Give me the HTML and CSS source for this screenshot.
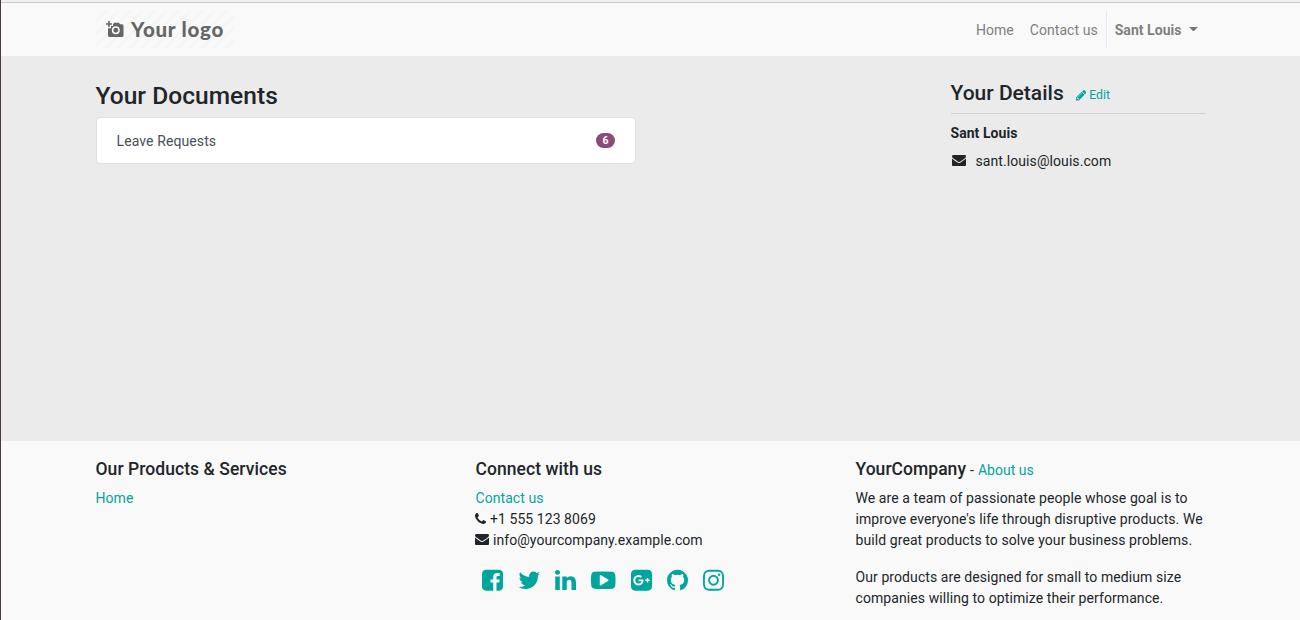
FILE: index.html
```
<!DOCTYPE html>
<html lang="en">
<head>
<meta charset="utf-8">
<title>Your Documents</title>
<link rel="stylesheet" href="styles.css">
</head>
<body>
<header class="header">
  <div class="container nav">
    <a class="logo">
      <svg class="logo-icon" viewBox="0 0 18 17"><path d="M2.200 0h1.600v2.200H6v1.600H3.800v2.200H2.200V3.800H0V2.200h2.200zM7 3.200l1.200-1.400h4.600L14.200 3.200H16q1.500 0 1.500 1.500V14.500q0 1.500-1.500 1.500H3.500Q2 16 2 14.500V7.200h3V5h2z" fill="#666"/><circle cx="9.800" cy="9.300" r="3.200" fill="none" stroke="#f9f9f9" stroke-width="1.500"/></svg>
      <span class="logo-text">Your logo</span>
    </a>
    <nav class="links">
      <a class="link home">Home</a>
      <a class="link contact">Contact us</a>
      <a class="link user"><b>Sant Louis</b><span class="caret"></span></a>
    </nav>
  </div>
</header>
<main class="main">
  <div class="container page">
    <section class="documents">
      <h3 class="title">Your Documents</h3>
      <div class="card"><span class="card-name">Leave Requests</span><span class="badge">6</span></div>
    </section>
    <aside class="details">
      <div class="details-head">
        <h4 class="details-title">Your Details</h4>
        <a class="edit"><svg class="pencil" viewBox="128 0 1536 1792"><path d="M491 1536l91-91-235-235-91 91v107h128v128h107zm523-928q0-22-22-22-10 0-17 7l-542 542q-7 7-7 17 0 22 22 22 10 0 17-7l542-542q7-7 7-17zm-54-192l416 416-832 832h-416v-416zm683 96q0 53-37 90l-166 166-416-416 166-165q36-38 90-38 53 0 91 38l235 234q37 39 37 91z"/></svg><span>Edit</span></a>
      </div>
      <div class="person">Sant Louis</div>
      <div class="mail"><svg class="icon" viewBox="0 0 1792 1792"><path d="M1792 710v794q0 66-47 113t-113 47h-1472q-66 0-113-47t-47-113v-794q44 49 101 87 362 246 497 345 57 42 92.500 65.500t94.500 48 110 24.500h2q51 0 110-24.500t94.500-48 92.500-65.500q170-123 498-345 57-39 100-87zm0-294q0 79-49 151t-122 123q-376 261-468 325-10 7-42.500 31t-54 38.500-52 32.500-57.500 27-50 9h-2q-23 0-50-9t-57.500-27-52-32.500-54-38.500-42.500-31q-91-64-262-182.500t-205-142.500q-62-42-117-115.500t-55-136.500q0-78 41.500-130t118.500-52h1472q65 0 112.500 47t47.500 113z"/></svg><span class="mail-text">sant.louis@louis.com</span></div>
    </aside>
  </div>
</main>
<footer class="footer">
  <div class="container columns">
    <section class="col">
      <h5 class="heading products">Our Products &amp; Services</h5>
      <a class="teal">Home</a>
    </section>
    <section class="col">
      <h5 class="heading">Connect with us</h5>
      <a class="teal">Contact us</a>
      <div class="row phone"><svg class="phone-icon" viewBox="192 0 1408 1792"><path d="M1600 1240q0 27-10 70.500t-21 68.500q-21 50-122 106-94 51-186 51-27 0-52.500-3.500t-57.500-12.500-47.500-14.500-55.500-20.500-49-18q-98-35-175-83-128-79-264.500-215.500t-215.500-264.500q-48-77-83-175-3-9-18-49t-20.500-55.500-14.500-47.500-12.500-57.500-3.500-52.500q0-92 51-186 56-101 106-122 25-11 68.500-21t70.500-10q14 0 21 3 18 6 53 76 11 19 30 54t35 63.500 31 53.500q3 4 17.500 25t21.500 35.500 7 28.500q0 20-28.500 50t-62 55-62 53-28.500 46q0 9 5 22.500t8.500 20.500 14 24 11.500 19q76 137 174 235t235 174q2 1 19 11.500t24 14 20.500 8.500 22.500 5q18 0 46-28.500t53-62 55-62 50-28.500q14 0 28.500 7t35.500 21.500 25 17.500q25 15 53.500 31t63.500 35 54 30q70 35 76 53 3 7 3 21z"/></svg><span>+1 555 123 8069</span></div>
      <div class="row"><svg class="icon" viewBox="0 0 1792 1792"><path d="M1792 710v794q0 66-47 113t-113 47h-1472q-66 0-113-47t-47-113v-794q44 49 101 87 362 246 497 345 57 42 92.500 65.500t94.500 48 110 24.500h2q51 0 110-24.500t94.500-48 92.500-65.500q170-123 498-345 57-39 100-87zm0-294q0 79-49 151t-122 123q-376 261-468 325-10 7-42.500 31t-54 38.500-52 32.500-57.500 27-50 9h-2q-23 0-50-9t-57.500-27-52-32.500-54-38.500-42.500-31q-91-64-262-182.500t-205-142.500q-62-42-117-115.500t-55-136.500q0-78 41.500-130t118.500-52h1472q65 0 112.500 47t47.500 113z"/></svg><span class="company-mail">info@yourcompany.example.com</span></div>
      <div class="social">
        <svg class="s" viewBox="128 0 1536 1792"><path d="M1376 128q119 0 203.500 84.500t84.500 203.500v960q0 119-84.500 203.500t-203.500 84.500h-188v-595h199l30-232h-229v-148q0-56 23.500-84t91.500-28l122-1v-207q-63-9-178-9-136 0-217.500 80t-81.500 226v171h-200v232h200v595h-532q-119 0-203.500-84.500t-84.500-203.500v-960q0-119 84.500-203.500t203.500-84.500h960z"/></svg>
        <svg class="s twitter" viewBox="64 0 1664 1792"><path d="M1684 408q-67 98-162 167 1 14 1 42 0 130-38 259.500t-115.500 248.500-184.500 210.500-258 146-323 54.500q-271 0-496-145 35 4 78 4 225 0 401-138-105-2-188-64.500t-114-159.500q33 5 61 5 43 0 85-11-112-23-185.500-111.500t-73.500-205.500v-4q68 38 146 41-66-44-105-115t-39-154q0-88 44-163 121 149 294.500 238.500t371.500 99.500q-8-38-8-74 0-134 94.500-228.500t228.500-94.500q140 0 236 102 109-21 205-78-37 115-142 178 93-10 186-50z"/></svg>
        <svg class="s" viewBox="128 0 1536 1792"><path d="M477 625v991h-330v-991h330zm21-306q1 73-50.500 122t-135.500 49h-2q-82 0-132-49t-50-122q0-74 51.500-122.500t134.500-48.500 133 48.500 51 122.500zm1166 729v568h-329v-530q0-105-40.500-164.500t-126.500-59.500q-63 0-105.500 34.500t-63.500 85.500q-11 30-11 81v553h-329q2-399 2-647t-1-296l-1-48h329v144h-2q20-32 41-56t56.500-52 87-43.500 114.500-15.500q171 0 275 113.500t104 332.500z"/></svg>
        <svg class="s youtube" viewBox="0 0 1792 1792"><path d="M1280 896q0-37-30-54l-512-320q-31-20-65-2-33 18-33 56v640q0 38 33 56 16 8 31 8 20 0 34-10l512-320q30-17 30-54zm512 0q0 96-1 150t-8.500 136.500-22.500 147.500q-16 73-69 123t-124 58q-222 25-671 25t-671-25q-71-8-124.500-58t-69.500-123q-14-65-21.500-147.500t-8.500-136.500-1-150 1-150 8.500-136.500 22.500-147.500q16-73 69-123t124-58q222-25 671-25t671 25q71 8 124.500 58t69.500 123q14 65 21.500 147.500t8.500 136.500 1 150z"/></svg>
        <svg class="s" viewBox="128 0 1536 1792"><path d="M1045 905q0-26-6-64h-362v132h217q-3 24-16.500 50t-37.500 53-66.500 44.500-96.500 17.500q-99 0-169-71t-70-171 70-171 169-71q92 0 153 59l104-101q-108-100-257-100-160 0-272 112.500t-112 271.500 112 271.500 272 112.500q165 0 266.500-105t101.500-270zm345 46h109v-110h-109v-110h-110v110h-110v110h110v110h110v-110zm274-535v960q0 119-84.500 203.500t-203.500 84.500h-960q-119 0-203.500-84.500t-84.500-203.500v-960q0-119 84.500-203.500t203.500-84.500h960q119 0 203.500 84.500t84.500 203.500z"/></svg>
        <svg class="s" viewBox="128 0 1536 1792"><path d="M896 128q209 0 385.500 103t279.500 279.500 103 385.500q0 251-146.500 451.500t-378.500 277.500q-27 5-40-7t-13-30q0-3 .5-76.500t.5-134.500q0-97-52-142 57-6 102.500-18t94-39 81-66.500 53-105 20.500-150.500q0-119-79-206 37-91-8-204-28-9-81 11t-92 44l-38 24q-93-26-192-26t-192 26q-16-11-42.500-27t-83.500-38.500-85-13.500q-45 113-8 204-79 87-79 206 0 85 20.500 150t52.500 105 80.500 67 94 39 102.500 18q-39 36-49 103-21 10-45 15t-57 5-65.500-21.500-55.500-62.500q-19-32-48.500-52t-49.500-24l-20-3q-21 0-29 4.500t-5 11.500 9 14 13 12l7 5q22 10 43.500 38t31.500 51l10 23q13 38 44 61.500t67 30 69.500 7 55.500-3.500l23-4q0 38 .5 88.500t.5 54.500q0 18-13 30t-40 7q-232-77-378.500-277.500t-146.500-451.500q0-209 103-385.500t279.500-279.500 385.500-103z"/></svg>
        <svg class="s" viewBox="128 0 1536 1792"><path d="M1152 896q0-106-75-181t-181-75-181 75-75 181 75 181 181 75 181-75 75-181zm138 0q0 164-115 279t-279 115-279-115-115-279 115-279 279-115 279 115 115 279zm108-410q0 38-27 65t-65 27-65-27-27-65 27-65 65-27 65 27 27 65zm-502-220q-7 0-76.500-.5t-105.500 0-96.500 3-103 10-71.500 18.500q-50 20-88 58t-58 88q-11 29-18.500 71.500t-10 103-3 96.500 0 105.500.5 76.500-.5 76.500 0 105.500 3 96.500 10 103 18.500 71.500q20 50 58 88t88 58q29 11 71.500 18.500t103 10 96.500 3 105.500 0 76.500-.5 76.500.5 105.500 0 96.500-3 103-10 71.500-18.500q50-20 88-58t58-88q11-29 18.500-71.500t10-103 3-96.500 0-105.500-.5-76.500.5-76.500 0-105.500-3-96.500-10-103-18.500-71.500q-20-50-58-88t-88-58q-29-11-71.500-18.500t-103-10-96.500-3-105.500 0-76.500.5zm768 630q0 229-5 317-10 208-124 322t-322 124q-88 5-317 5t-317-5q-208-10-322-124t-124-322q-5-88-5-317t5-317q10-208 124-322t322-124q88-5 317-5t317 5q208 10 322 124t124 322q5 88 5 317z"/></svg>
      </div>
    </section>
    <section class="col about">
      <div class="company"><h5 class="heading">YourCompany</h5><span class="dash">-</span><a class="teal">About us</a></div>
      <p class="para">We are a team of passionate people whose goal is to<br>improve everyone's life through disruptive products. We<br>build great products to solve your business problems.</p>
      <p class="para">Our products are designed for small to medium size<br>companies willing to optimize their performance.</p>
    </section>
  </div>
</footer>
</body>
</html>
```
FILE: styles.css
```
* { box-sizing: border-box; }
body {
  margin: 0;
  height: 620px;
  overflow: hidden;
  display: flex;
  flex-direction: column;
  border-left: 1px solid #4a3a40;
  background: #f9f9f9;
  color: #212529;
  font: 14px/21px Roboto, sans-serif;
}
h3, h4, h5, p { margin: 0; font-weight: 500; }
svg { display: block; flex: none; fill: currentColor; }
.container { width: 1110px; margin-left: 94.500px; }
.header { flex: none; height: 56px; border-top: 2px solid #f0f0f0; background: #f9f9f9; box-shadow: inset 0 1px #ccc; }
.nav { height: 54px; padding-top: 9px; display: flex; justify-content: space-between; align-items: flex-start; }
.logo {
  width: 138px; height: 37px; padding-left: 10.500px;
  display: flex; align-items: center; gap: 7px;
  color: #666;
  background: repeating-linear-gradient(135deg, #f9f9f9 0 6px, #f5f5f5 6px 8.500px);
}
.logo-icon { width: 18px; height: 17px; margin-top: -1px; }
.logo-text { font: 900 20.500px/24px Lato, sans-serif; letter-spacing: .75px; margin-top: -2px; }
.links { display: flex; align-items: center; height: 37px; color: #808080; }
.link { letter-spacing: .05px; padding-top: 1px; }
.home { margin-right: 16px; }
.contact { margin-right: 8px; }
.user { height: 37px; padding: 9px 7.500px 0 8px; display: flex; border-left: 1px solid #e6e6f2; letter-spacing: .04px; }
.caret { margin: 7px 0 0 7.500px; width: 9px; height: 5px; border: 4.500px solid transparent; border-top-color: #777; border-bottom: 0; }
.main { flex: none; height: 385px; background: #ebebeb; }
.page { display: flex; justify-content: space-between; padding-top: 24px; }
.documents { width: 540.500px; }
.title { font-size: 24.500px; line-height: 29px; padding-top: 1px; margin-bottom: 7px; letter-spacing: .05px; }
.card { height: 47px; margin-left: .5px; padding: 2px 20px 0 19.500px; display: flex; justify-content: space-between; align-items: center; background: #fff; border: 1px solid #dfdfdf; border-radius: 4px; color: #495057; letter-spacing: .1px; }
.badge { margin-top: -2px; width: 19px; height: 15px; border-radius: 8px; background: #8c4a78; color: #fff; font-size: 10.500px; font-weight: 700; line-height: 16px; text-align: center; letter-spacing: 0; }
.details { width: 255px; }
.details-head { display: flex; align-items: flex-start; height: 34px; border-bottom: 1px solid #cfcfcf; }
.details-title { font-size: 21px; line-height: 26px; }
.edit { display: flex; align-items: center; gap: 3px; margin: 5px 0 0 12px; color: #00a59d; font-size: 12.250px; }
.pencil { width: 10.500px; height: 12.250px; }
.person { margin-top: 9px; font-weight: 700; letter-spacing: .05px; }
.mail { display: flex; align-items: center; margin: 7px 0 0 1.500px; letter-spacing: .08px; }
.icon { width: 14px; height: 14px; margin-top: -3px; }
.mail-text { margin-left: 9.500px; }
.footer { flex: 1; background: #f9f9f9; }
.columns { display: grid; grid-template-columns: 380px 380px 350px; padding-top: 18px; letter-spacing: .06px; }
.heading { font-size: 17.500px; line-height: 21px; }
.teal { color: #00a59d; }
.col > .heading { margin-bottom: 8px; }
.col > .teal { display: block; }
.row { display: flex; align-items: center; gap: 4px; margin-left: -.5px; }
.phone-icon { width: 11px; height: 14px; margin-top: -2px; }
.social { display: flex; gap: 15px; padding: 17px 0 0 6.200px; color: #00a59d; }
.s { width: 21px; height: 24.500px; }
.twitter { width: 22.750px; }
.youtube { width: 24.500px; }
.company { display: flex; align-items: baseline; gap: 4px; margin-bottom: 7px; letter-spacing: .03px; }
.para { font-weight: 400; margin-bottom: 16px; white-space: nowrap; letter-spacing: .085px; }
```
